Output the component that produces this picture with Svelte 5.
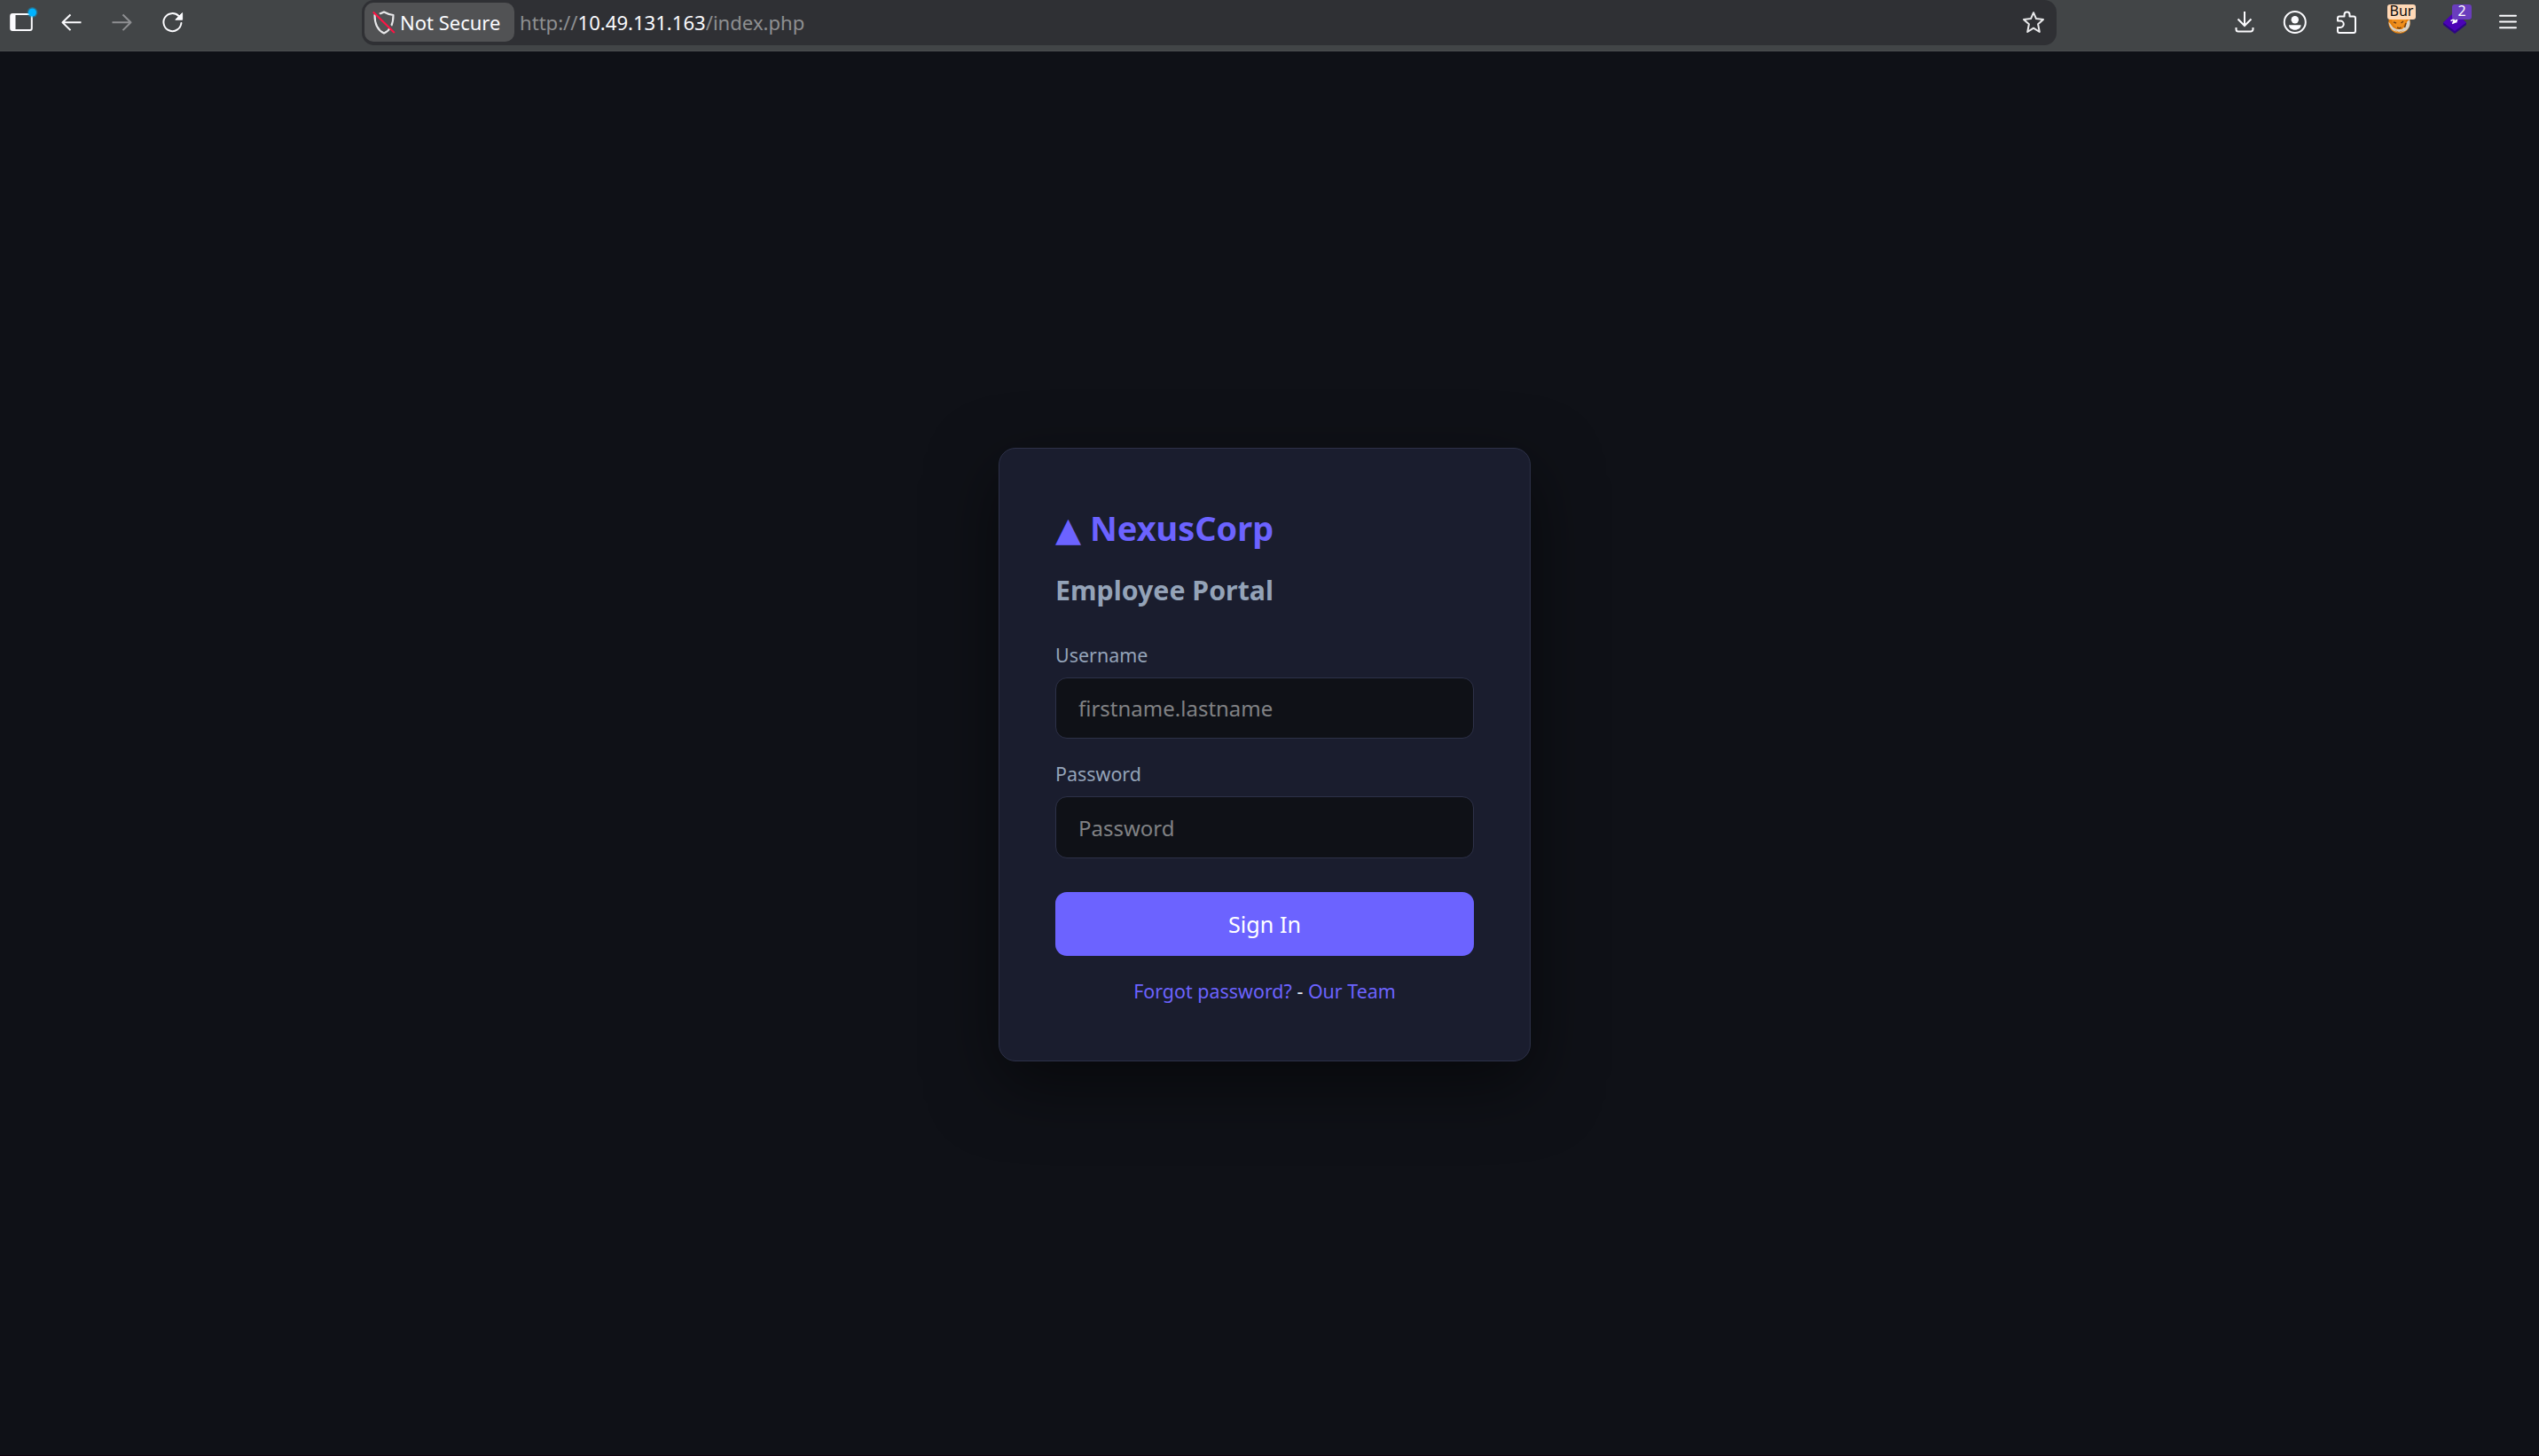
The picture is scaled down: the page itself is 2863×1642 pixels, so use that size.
<script lang="ts">
	let username = $state('');
	let password = $state('');
	let badges = { proxy: 'Bur', wallet: '2' };
</script>

<div class="window">
	<header class="toolbar">
		<nav class="nav-buttons">
			<svg width="28" height="50" viewBox="0 0 28 50" fill="none">
				<rect x="2.2" y="16" width="23.6" height="18" rx="2" stroke="#fbfbfe" stroke-width="2" />
				<path d="M2 16h5.5v18H2z" fill="#fbfbfe" />
				<circle cx="26.5" cy="14" r="6" fill="#00b3f4" opacity=".35" />
				<circle cx="26.5" cy="14" r="4.5" fill="#00b3ff" />
			</svg>
			<svg width="28" height="50" viewBox="0 0 28 50" fill="none" stroke="#fbfbfe" stroke-width="2">
				<path d="M24.5 25.3H3.5M12.5 16.5L3.5 25.3l9 8.8" stroke-linejoin="round" />
			</svg>
			<svg width="28" height="50" viewBox="0 0 28 50" fill="none" stroke="#8e8f92" stroke-width="2">
				<path d="M2.5 25.3h21M14.5 16.5l9 8.8-9 8.8" stroke-linejoin="round" />
			</svg>
			<svg width="28" height="50" viewBox="0 0 28 50" fill="none">
				<path d="M23.4 26A10 10 0 1 1 20.5 18" stroke="#fbfbfe" stroke-width="2" stroke-linecap="round" />
				<path d="M24.6 14.6v7.6h-7.8z" fill="#fbfbfe" stroke="#fbfbfe" stroke-linejoin="round" />
			</svg>
		</nav>

		<div class="urlbar">
			<div class="identity">
				<svg width="26" height="44" viewBox="0 0 26 44" fill="none">
					<path d="M13 10.5c-3.5 2-6.5 3-10.5 3.5 0 8 2 16.5 10.5 20.5 8.5-4 10.5-12.5 10.5-20.5-4-.5-7-1.5-10.5-3.500z" stroke="#e8e8ea" stroke-width="2.1" stroke-linejoin="round" />
					<path d="M2.5 9.3l23.5 23.5" stroke="#515254" stroke-width="3" />
					<path d="M.8 10.5l24 23.5" stroke="#ff1344" stroke-width="2.1" />
				</svg>
				<span>Not Secure</span>
			</div>
			<div class="address">http://<b>10.49.131.163</b>/index.php</div>
			<svg class="star" width="28" height="50" viewBox="0 0 28 50" fill="none">
				<path d="M14 14.2l3 6.9 8 .9-5.9 5.2 1.7 8.8L14 31.7 7.2 36l1.7-8.8L3 22l8-.9z" stroke="#e8e8ea" stroke-width="2" stroke-linejoin="round" />
			</svg>
		</div>

		<div class="actions">
			<svg width="28" height="50" viewBox="0 0 28 50" fill="none" stroke="#fbfbfe" stroke-width="2">
				<path d="M14 13v15.5M6.5 21.5l7.5 7.5 7.5-7.5M4.5 31v2a2.5 2.5 0 0 0 2.5 2.5h14a2.5 2.5 0 0 0 2.5-2.5v-2" />
			</svg>
			<svg width="28" height="50" viewBox="0 0 28 50" fill="none">
				<circle cx="13.8" cy="25" r="12" stroke="#fbfbfe" stroke-width="2" />
				<circle cx="13.8" cy="22.3" r="4.2" fill="#fbfbfe" />
				<path d="M7 28.3h13.6c0 3.2-3 5.5-6.8 5.5S7 31.5 7 28.3z" fill="#fbfbfe" />
			</svg>
			<svg width="28" height="50" viewBox="0 0 28 50" fill="none">
				<path d="M5 23.5v-3a2 2 0 0 1 2-2h5.500v-2a3 3 0 0 1 6 0v2h4.500a2 2 0 0 1 2 2V35a2 2 0 0 1-2 2H7a2 2 0 0 1-2-2v-4h3a3.500 3.500 0 0 0 0-7.500z" stroke="#fbfbfe" stroke-width="2" stroke-linejoin="round" />
			</svg>
			<div class="extension">
				<svg width="36" height="50" viewBox="0 0 36 50">
					<circle cx="17.5" cy="25.5" r="12.2" fill="#e47f0c" />
					<path d="M5.5 25c2 1 3 4 5 6l4 2 6 0 4-4 2-5 2.500-2c1.500 6-.5 11-5 13l-6 2-6-2c-4-2-6-6-6.500-10z" fill="#d8d3ca" />
					<path d="M8 20l5 2 8-1 5-1-2 6-4 5-5 1-4-4z" fill="#f0901f" />
					<path d="M11 33l6 3 6-2-6 3z" fill="#e47f0c" />
					<path d="M11 25l3 1M22 24l-2.5 2M15 31l2.5 1 2-1M25 26l-1.5 5" stroke="#734012" stroke-width="1.5" fill="none" />
				</svg>
				<span class="badge proxy">{badges.proxy}</span>
			</div>
			<div class="extension">
				<svg width="36" height="50" viewBox="0 0 36 50">
					<path d="M2 25.5L15 14l13 11.5v2.5L15 38 2 28z" fill="#2d0584" />
					<path d="M2 25.5L15 13l13 12.5L15 35z" fill="#4b03b6" />
					<path d="M10.5 23.5l4-2-1 3 4-2-1 3M12 26.5l4.5-2" stroke="#fff" stroke-width="1.5" fill="none" />
				</svg>
				<span class="badge wallet">{badges.wallet}</span>
			</div>
			<svg width="20" height="50" viewBox="0 0 20 50" stroke="#fbfbfe" stroke-width="2" stroke-linecap="round">
				<path d="M1 17.7h18M1 24.5h18M1 31.3h18" />
			</svg>
		</div>
	</header>

	<main>
		<form class="card" onsubmit={(e) => e.preventDefault()}>
			<h1>▲ NexusCorp</h1>
			<h2>Employee Portal</h2>
			<label for="username">Username</label>
			<input id="username" type="text" placeholder="firstname.lastname" bind:value={username} />
			<label for="password">Password</label>
			<input id="password" type="password" placeholder="Password" bind:value={password} />
			<button type="submit">Sign In</button>
			<p class="links"><a href="#forgot">Forgot password?</a> - <a href="#team">Our Team</a></p>
		</form>
	</main>
</div>

<style>
	:global(body) {
		margin: 0;
		background: #0f1117;
	}

	.window {
		box-sizing: border-box;
		display: flex;
		flex-direction: column;
		height: 1642px;
		overflow: hidden;
		border-bottom: 1px solid #10000e;
		font-family: 'Noto Sans', 'DejaVu Sans', sans-serif;
		color: #e2e8f0;
	}

	svg {
		display: block;
		flex: none;
		overflow: visible;
	}

	.toolbar {
		box-sizing: border-box;
		display: flex;
		align-items: flex-start;
		flex: none;
		height: 58px;
		padding: 0 25px 0 10px;
		background: #424547;
		border-bottom: 1px solid #4a4d50;
	}

	.nav-buttons,
	.actions {
		display: flex;
		gap: 29px;
	}

	.urlbar {
		box-sizing: border-box;
		display: flex;
		align-items: center;
		width: 1911px;
		height: 51px;
		margin: 0 auto 0 199px;
		padding: 0 12px 1px 3px;
		background: #2f3034;
		border-radius: 14px;
		font-size: 22px;
	}

	.identity {
		box-sizing: border-box;
		display: flex;
		align-items: center;
		gap: 5px;
		width: 169px;
		height: 44px;
		padding-left: 9px;
		background: #515254;
		border-radius: 10px;
		color: #fbfbfe;
		white-space: nowrap;
	}

	.address {
		margin-left: 6px;
		font-size: 22.1px;
		color: #8e8f91;
	}

	.address b {
		font-weight: 400;
		color: #fbfbfe;
	}

	.star {
		margin-left: auto;
	}

	.extension {
		position: relative;
	}

	.badge {
		position: absolute;
		top: 5px;
		height: 17px;
		border-radius: 3px;
		font-size: 16px;
		line-height: 14px;
		text-align: center;
	}

	.proxy {
		left: 4px;
		width: 32px;
		background: #ffd8b6;
		color: #0c0c0d;
	}

	.wallet {
		left: 12px;
		width: 22px;
		background: #6a3dbd;
		color: #fff;
	}

	main {
		flex: 1;
		display: flex;
		align-items: center;
		justify-content: center;
		padding: 2px 11px 0 0;
	}

	.card {
		box-sizing: border-box;
		display: flex;
		flex-direction: column;
		width: 600px;
		height: 692px;
		padding: 63px;
		background: #1a1d2e;
		border: 1px solid #2d3148;
		border-radius: 19px;
		box-shadow: 0 26px 77px rgba(0, 0, 0, .5);
	}

	h1 {
		margin: 0 0 24px;
		font-size: 37.9px;
		line-height: 52px;
		color: #6c63ff;
	}

	h2 {
		margin: 0 0 37px;
		font-size: 30.3px;
		line-height: 42px;
		color: #94a3b8;
	}

	label {
		margin-bottom: 10px;
		font-size: 21.45px;
		line-height: 30px;
		color: #94a3b8;
	}

	input {
		box-sizing: border-box;
		width: 100%;
		height: 70px;
		margin: 0 0 25px;
		padding: 0 25px;
		background: #0f1117;
		border: 1px solid #2d3148;
		border-radius: 13px;
		font: 24px 'Noto Sans', sans-serif;
		color: #e2e8f0;
	}

	input::placeholder {
		color: #808184;
	}

	button {
		height: 72px;
		margin-top: 13px;
		padding: 0;
		background: #6c63ff;
		border: 0;
		border-radius: 13px;
		font: 25.2px 'Noto Sans', sans-serif;
		color: #fff;
	}

	.links {
		margin: 25px 0 0;
		font-size: 21.45px;
		line-height: 30px;
		text-align: center;
	}

	a {
		color: #6c63ff;
		text-decoration: none;
	}
</style>
